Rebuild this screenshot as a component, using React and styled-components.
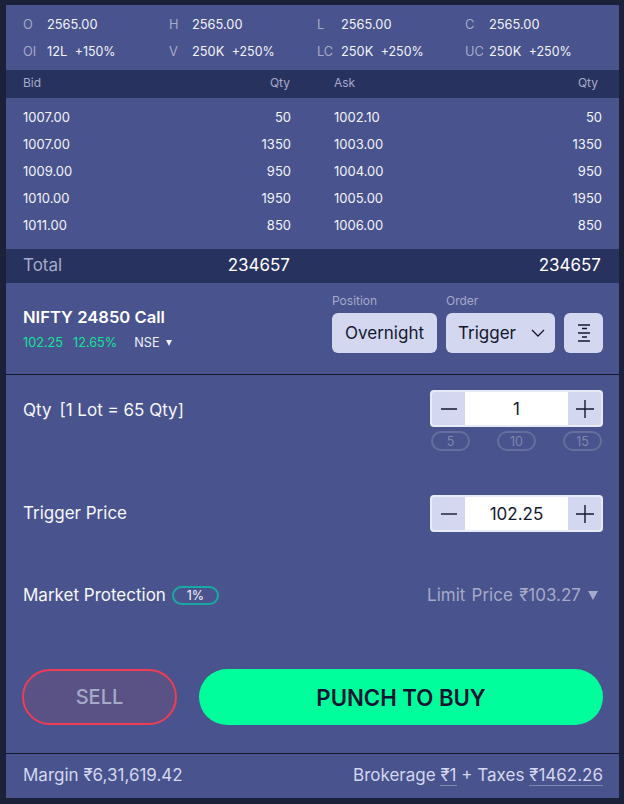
import React from 'react';
import styled, { createGlobalStyle } from 'styled-components';

const GlobalStyle = createGlobalStyle`
  html, body { margin: 0; padding: 0; background: #1b2139; }
  body { font-family: Inter, "Noto Sans", sans-serif; }
  * { box-sizing: border-box; }
`;

const Panel = styled.div`
  width: 613px;
  height: 793px;
  margin: 5px 0 0 6px;
  background: #49538d;
  display: flex;
  flex-direction: column;
  color: #fff;
`;

const Stats = styled.div`
  height: 65px;
  padding: 6px 0 0 17px;
  display: grid;
  grid-template-columns: 146px 148px 148px 1fr;
  grid-auto-rows: 27px;
  font-size: 12.8px;
`;

const Stat = styled.div`
  display: flex;
  align-items: center;
  color: #f2f3fa;
  span:first-child { width: 24px; color: #a5aac9; }
  &:nth-child(4n + 2) span:first-child { width: 23px; }
  span + span + span { margin-left: 7.5px; font-size: 12.4px; }
`;

const Strip = styled.div`
  height: 28px;
  background: #28325f;
  display: grid;
  grid-template-columns: 267px 264px;
  column-gap: 44px;
  padding: 0 0 3px 17px;
  align-items: center;
  font-size: 12px;
  color: #a5aac9;
`;

const Pair = styled.div`
  display: flex;
  justify-content: space-between;
`;

const Book = styled.div`
  height: 151px;
  padding: 5px 0 0 17px;
  display: grid;
  grid-template-columns: 268px 268px;
  column-gap: 43px;
  grid-auto-rows: 27px;
  font-size: 13px;
  color: #f2f3fa;
`;

const BookCell = styled.div`
  display: flex;
  align-items: center;
  justify-content: space-between;
`;

const TotalBar = styled.div`
  height: 34px;
  background: #28325f;
  display: grid;
  grid-template-columns: 267px 311px;
  padding: 0 0 3px 17px;
  align-items: center;
  font-size: 17px;
  color: #fff;
`;

const TotalLabel = styled.div`
  display: flex;
  justify-content: space-between;
  span:first-child { color: #a5aac9; }
`;

const TotalValue = styled.div`
  text-align: right;
`;

const Instrument = styled.div`
  height: 92px;
  border-bottom: 1px solid #14182b;
  padding: 0 16px 0 17px;
  display: flex;
  align-items: flex-start;
  justify-content: space-between;
`;

const Name = styled.div`
  padding-top: 24px;
  font-size: 16.6px;
  font-weight: 600;
  line-height: 20px;
`;

const Quote = styled.div`
  margin-top: 8px;
  display: flex;
  align-items: center;
  font-size: 12.7px;
  font-weight: 400;
  line-height: 16px;
  color: #12e39b;
  span { margin-right: 10px; }
`;

const Exchange = styled.div`
  margin-left: 7px;
  display: flex;
  align-items: center;
  gap: 6px;
  color: #eef0fa;
  &::after {
    content: '';
    border-left: 3.5px solid transparent;
    border-right: 3.5px solid transparent;
    border-top: 6px solid #eef0fa;
  }
`;

const Controls = styled.div`
  display: flex;
  align-items: flex-end;
  gap: 9px;
  padding-top: 10px;
`;

const Control = styled.div`
  display: flex;
  flex-direction: column;
  gap: 5px;
`;

const Caption = styled.div`
  font-size: 12px;
  line-height: 15px;
  color: #a5aac9;
`;

const Select = styled.div`
  width: ${(p) => p.$w}px;
  height: 40px;
  border-radius: 6px;
  background: #d3d7f0;
  color: #14182f;
  font-size: 17px;
  display: flex;
  align-items: center;
  justify-content: ${(p) => (p.$center ? 'center' : 'space-between')};
  padding: ${(p) => (p.$center ? '0' : '0 10px 0 12px')};
`;

const Form = styled.div`
  flex: 1;
  padding: 15px 16px 0 17px;
  display: flex;
  flex-direction: column;
`;

const Row = styled.div`
  display: flex;
  justify-content: space-between;
  align-items: ${(p) => p.$align || 'center'};
  margin-top: ${(p) => p.$top || 0}px;
`;

const Label = styled.div`
  font-size: 17px;
  line-height: 37px;
  padding-top: ${(p) => p.$top || 0}px;
  color: #f6f7fc;
  span { margin-left: 8px; }
`;

const StepperWrap = styled.div`
  width: 173px;
`;

const Stepper = styled.div`
  height: 37px;
  display: grid;
  grid-template-columns: 33px 1fr 33px;
  background: #fff;
  border: 2px solid #e8eaf7;
  border-radius: 4px;
  overflow: hidden;
  color: #14182f;
  font-size: 17px;
`;

const StepButton = styled.div`
  background: #d3d7f0;
  display: flex;
  align-items: center;
  justify-content: center;
`;

const StepValue = styled.div`
  display: flex;
  align-items: center;
  justify-content: center;
`;

const Chips = styled.div`
  margin-top: 4px;
  display: flex;
  justify-content: space-between;
  padding: 0 1px;
`;

const Chip = styled.div`
  width: 39px;
  height: 20px;
  border: 2px solid #666e9e;
  border-radius: 10px;
  color: #7f86ae;
  font-size: 12.5px;
  display: flex;
  align-items: center;
  justify-content: center;
`;

const Protection = styled.div`
  display: flex;
  align-items: center;
  gap: 6px;
  font-size: 17px;
  color: #f6f7fc;
`;

const Pill = styled.div`
  width: 47px;
  height: 19px;
  border: 2px solid #1aa9a0;
  border-radius: 10px;
  font-size: 12.5px;
  display: flex;
  align-items: center;
  justify-content: center;
`;

const LimitPrice = styled.div`
  display: flex;
  align-items: center;
  gap: 7px;
  padding-right: 5px;
  font-size: 17px;
  word-spacing: 1.5px;
  color: #a5aac9;
  &::after {
    content: '';
    border-left: 5.5px solid transparent;
    border-right: 5.5px solid transparent;
    border-top: 9px solid #a5aac9;
  }
`;

const Actions = styled.div`
  margin: 64px 0 0 -1px;
  display: flex;
  gap: 22px;
`;

const Sell = styled.div`
  width: 155px;
  height: 56px;
  border: 2px solid #ef3d54;
  border-radius: 28px;
  background: #5a5284;
  color: #a5aac9;
  font-size: 20px;
  font-weight: 500;
  display: flex;
  align-items: center;
  justify-content: center;
`;

const Buy = styled.div`
  flex: 1;
  height: 56px;
  border-radius: 28px;
  background: #00ff9c;
  color: #0f1430;
  font-size: 22.2px;
  font-weight: 600;
  display: flex;
  align-items: center;
  justify-content: center;
`;

const Footer = styled.div`
  height: 45px;
  border-top: 1px solid #14182b;
  padding: 0 16px 2px 17px;
  display: flex;
  align-items: center;
  justify-content: space-between;
  font-size: 17px;
  color: #d3d7f0;
`;

const Dotted = styled.span`
  border-bottom: 1px solid #7f86ae;
`;

const Minus = () => (
  <svg width="16" height="16" viewBox="0 0 16 16"><path d="M0 8h16" stroke="#14182f" strokeWidth="1.4" /></svg>
);

const Plus = () => (
  <svg width="18" height="18" viewBox="0 0 18 18"><path d="M0 9h18M9 0v18" stroke="#14182f" strokeWidth="1.4" /></svg>
);

const Chevron = () => (
  <svg width="14" height="8" viewBox="0 0 14 8" fill="none"><path d="M1 1l6 6 6-6" stroke="#14182f" strokeWidth="1.3" /></svg>
);

const DepthIcon = () => (
  <svg width="12" height="18" viewBox="0 0 12 18" fill="none" stroke="#14182f">
    <path d="M0 1h12M4 4.5h5M0 9h12M4 13h5M0 17h12" strokeWidth="1.3" />
  </svg>
);

const stats = [
  [['O', '2565.00'], ['H', '2565.00'], ['L', '2565.00'], ['C', '2565.00']],
  [['OI', '12L', '+150%'], ['V', '250K', '+250%'], ['LC', '250K', '+250%'], ['UC', '250K', '+250%']],
];

const book = [
  ['1007.00', '50', '1002.10', '50'],
  ['1007.00', '1350', '1003.00', '1350'],
  ['1009.00', '950', '1004.00', '950'],
  ['1010.00', '1950', '1005.00', '1950'],
  ['1011.00', '850', '1006.00', '850'],
];

const StepperControl = ({ value }) => (
  <Stepper>
    <StepButton><Minus /></StepButton>
    <StepValue>{value}</StepValue>
    <StepButton><Plus /></StepButton>
  </Stepper>
);

export default function App() {
  return (
    <>
      <GlobalStyle />
      <Panel>
        <Stats>
          {stats.flat().map((s) => (
            <Stat key={s[0]}>
              {s.map((t, i) => <span key={i}>{t}</span>)}
            </Stat>
          ))}
        </Stats>
        <Strip>
          <Pair><span>Bid</span><span>Qty</span></Pair>
          <Pair><span>Ask</span><span>Qty</span></Pair>
        </Strip>
        <Book>
          {book.map((r, i) => (
            <React.Fragment key={i}>
              <BookCell><span>{r[0]}</span><span>{r[1]}</span></BookCell>
              <BookCell><span>{r[2]}</span><span>{r[3]}</span></BookCell>
            </React.Fragment>
          ))}
        </Book>
        <TotalBar>
          <TotalLabel><span>Total</span><span>234657</span></TotalLabel>
          <TotalValue>234657</TotalValue>
        </TotalBar>
        <Instrument>
          <Name>
            NIFTY 24850 Call
            <Quote>
              <span>102.25</span>
              <span>12.65%</span>
              <Exchange>NSE</Exchange>
            </Quote>
          </Name>
          <Controls>
            <Control>
              <Caption>Position</Caption>
              <Select $w={105} $center>Overnight</Select>
            </Control>
            <Control>
              <Caption>Order</Caption>
              <Select $w={109}>Trigger<Chevron /></Select>
            </Control>
            <Select $w={39} $center><DepthIcon /></Select>
          </Controls>
        </Instrument>
        <Form>
          <Row $align="flex-start">
            <Label $top={2}>Qty<span>[1 Lot = 65 Qty]</span></Label>
            <StepperWrap>
              <StepperControl value="1" />
              <Chips>
                <Chip>5</Chip>
                <Chip>10</Chip>
                <Chip>15</Chip>
              </Chips>
            </StepperWrap>
          </Row>
          <Row $top={44}>
            <Label>Trigger Price</Label>
            <StepperWrap><StepperControl value="102.25" /></StepperWrap>
          </Row>
          <Row $top={53}>
            <Protection>Market Protection <Pill>1%</Pill></Protection>
            <LimitPrice>Limit Price ₹103.27</LimitPrice>
          </Row>
          <Actions>
            <Sell>SELL</Sell>
            <Buy>PUNCH TO BUY</Buy>
          </Actions>
        </Form>
        <Footer>
          <span>Margin ₹6,31,619.42</span>
          <span>Brokerage <Dotted>₹1</Dotted> + Taxes <Dotted>₹1462.26</Dotted></span>
        </Footer>
      </Panel>
    </>
  );
}
